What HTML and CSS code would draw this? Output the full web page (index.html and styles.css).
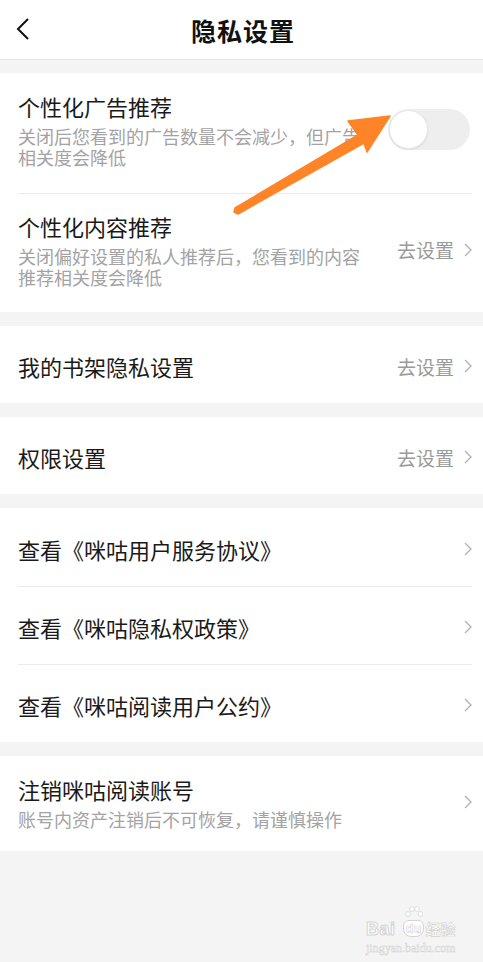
FILE: index.html
```html
<!DOCTYPE html>
<html>
<head lang="zh-CN">
    <meta charset="UTF-8">
    <title>隐私设置</title>
    <link rel="stylesheet" href="styles.css">
</head>
<body>
<div id="page">
    <div class="header">
        <a href="javascript:;" class="back">
            <svg width="14" height="22" viewBox="0 0 14 22"><polyline points="12,1 2,11 12,21" fill="none" stroke="#111" stroke-width="2"/></svg>
        </a>
        <h1>隐私设置</h1>
    </div>

    <div class="group">
        <div class="item tall">
            <div class="text">
                <div class="title">个性化广告推荐</div>
                <div class="desc">关闭后您看到的广告数量不会减少，但广告相关度会降低</div>
            </div>
            <div class="switch"><span class="knob"></span></div>
        </div>
        <div class="item tall">
            <div class="text">
                <div class="title">个性化内容推荐</div>
                <div class="desc">关闭偏好设置的私人推荐后，您看到的内容推荐相关度会降低</div>
            </div>
            <div class="more">去设置<svg class="chev" width="8" height="14" viewBox="0 0 8 14"><polyline points="1,1 7,7 1,13"/></svg></div>
        </div>
    </div>

    <div class="group">
        <div class="item">
            <div class="title">我的书架隐私设置</div>
            <div class="more">去设置<svg class="chev" width="8" height="14" viewBox="0 0 8 14"><polyline points="1,1 7,7 1,13"/></svg></div>
        </div>
    </div>

    <div class="group">
        <div class="item">
            <div class="title">权限设置</div>
            <div class="more">去设置<svg class="chev" width="8" height="14" viewBox="0 0 8 14"><polyline points="1,1 7,7 1,13"/></svg></div>
        </div>
    </div>

    <div class="group">
        <div class="item row">
            <div class="title">查看《咪咕用户服务协议》</div>
            <div class="more"><svg class="chev" width="8" height="14" viewBox="0 0 8 14"><polyline points="1,1 7,7 1,13"/></svg></div>
        </div>
        <div class="item row">
            <div class="title">查看《咪咕隐私权政策》</div>
            <div class="more"><svg class="chev" width="8" height="14" viewBox="0 0 8 14"><polyline points="1,1 7,7 1,13"/></svg></div>
        </div>
        <div class="item row">
            <div class="title">查看《咪咕阅读用户公约》</div>
            <div class="more"><svg class="chev" width="8" height="14" viewBox="0 0 8 14"><polyline points="1,1 7,7 1,13"/></svg></div>
        </div>
    </div>

    <div class="group">
        <div class="item tall short">
            <div class="text">
                <div class="title">注销咪咕阅读账号</div>
                <div class="desc">账号内资产注销后不可恢复，请谨慎操作</div>
            </div>
            <div class="more"><svg class="chev" width="8" height="14" viewBox="0 0 8 14"><polyline points="1,1 7,7 1,13"/></svg></div>
        </div>
    </div>

    <!-- 标注箭头 -->
    <svg class="pointer" width="483" height="962" viewBox="0 0 483 962">
        <polygon points="390,116 348,121 358,135 235,208 234,212 238,214 364,143 367,152" fill="#ff8427" stroke="#ff8427" stroke-width="1.5" stroke-linejoin="round"/>
    </svg>

    <div class="mark">
        <div class="logo">
            <span class="bai">Bai</span>
            <span class="du">du
                <svg class="paw" width="18" height="14" viewBox="0 0 18 14"><circle cx="3" cy="8" r="2.4"/><circle cx="7" cy="3" r="2.4"/><circle cx="12" cy="3" r="2.4"/><circle cx="15.5" cy="8" r="2.4"/></svg>
            </span>
            <span class="jy">经验</span>
        </div>
        <div class="site">jingyan.baidu.com</div>
    </div>
</div>
</body>
</html>
```

FILE: styles.css
```css
* { margin: 0; padding: 0; box-sizing: border-box; text-decoration: none; }
body { background: #f4f4f4; font-family: "Noto Sans CJK SC", "Noto Sans", sans-serif; color: #1a1a1a; }
#page { position: relative; width: 483px; min-height: 962px; }

.header { height: 60px; background: #fff; border-bottom: 1px solid #e8e8e8;
    display: flex; align-items: center; justify-content: center; position: relative; }
.header h1 { font-size: 25px; font-weight: 700; color: #111; letter-spacing: 1px; margin-left: 3px; }
.back { position: absolute; left: 16px; top: 18px; display: block; width: 14px; height: 22px; }
.back svg { display: block; }

.group { background: #fff; margin-top: 13px; padding: 0 11px 0 18px; }
.group + .group { margin-top: 14px; }

.item { display: flex; align-items: center; justify-content: space-between; height: 77px; padding-top: 3px; }
.item.row { height: 78px; }
.item + .item { border-top: 1px solid #ececec; }
.item.tall { height: auto; padding: 18px 0 25px; }
.item.tall.short { padding-bottom: 21px; }
.item.tall + .item.tall { height: 119px; }

.title { font-size: 22px; line-height: 30px; color: #1a1a1a; }
.desc { font-size: 18px; line-height: 21px; color: #a3a3a3; margin-top: 5px; max-width: 352px; }

.more { display: flex; align-items: center; font-size: 19px; color: #9a9a9a; }
.chev { display: block; margin-left: 10px; fill: none; stroke: #b0b0b0; stroke-width: 1.3; }

.switch { width: 82px; height: 41px; border-radius: 21px; background: #eeeeee; margin-right: 2px;
    display: flex; align-items: center; padding-left: 1px; }
.knob { width: 39px; height: 39px; border-radius: 50%; background: #fff;
    border: 1px solid #e6e6e6; box-shadow: 0 1px 2px rgba(0,0,0,.08); }

.pointer { position: absolute; left: 0; top: 0; pointer-events: none; }

.mark { position: absolute; left: 366px; top: 906px; width: 100px; white-space: nowrap; color: #fff; }
.logo { display: flex; align-items: flex-end; height: 32px; }
.bai { font-family: "Liberation Sans", Arial, sans-serif; font-size: 18px; font-weight: 700; line-height: 18px;
    -webkit-text-stroke: 1px #d4d4d4; letter-spacing: 0.5px; }
.du { position: relative; font-family: "Liberation Sans", Arial, sans-serif; font-size: 13px; font-weight: 700;
    line-height: 15px; background: #fff; border: 1px solid #d4d4d4; border-radius: 6px 6px 8px 8px;
    padding: 0 2px; margin: 0 1px 1px 7px; -webkit-text-stroke: 0.5px #cfcfcf; }
.paw { position: absolute; left: 1px; top: -15px; fill: #fff; stroke: #d4d4d4; stroke-width: 0.8; }
.jy { font-size: 15px; font-weight: 700; line-height: 18px; -webkit-text-stroke: 0.6px #d0d0d0; }
.site { font-family: "Liberation Serif", serif; font-size: 12px; line-height: 14px; margin-top: 3px;
    -webkit-text-stroke: 0.5px #d3d3d3; }
```
